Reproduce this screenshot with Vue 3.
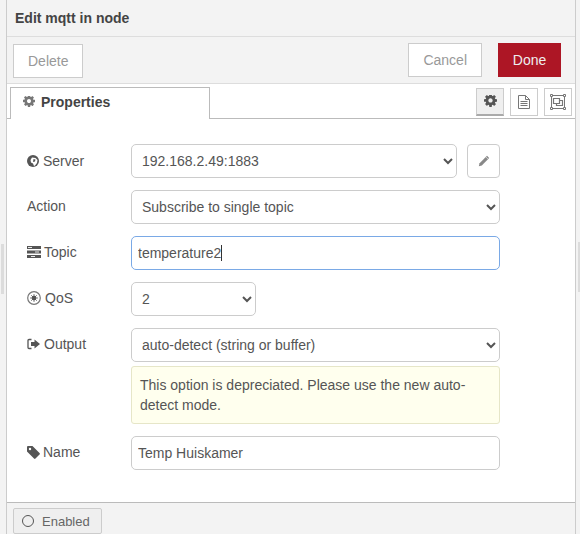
<script setup>
const cog = "M1024 640q0-106-75-181t-181-75-181 75-75 181 75 181 181 75 181-75 75-181zm512-109v222q0 12-8 23t-20 13l-185 28q-19 54-39 91 35 50 107 138 10 12 10 25t-9 23q-27 37-99 108t-94 71q-12 0-26-9l-138-108q-44 23-91 38-16 136-29 186-7 28-36 28h-222q-14 0-24.500-8.500t-11.500-21.500l-28-184q-49-16-90-37l-141 107q-10 9-25 9-14 0-25-11-126-114-165-168-7-10-7-23 0-12 8-23 15-21 51-66.500t54-70.500q-27-50-41-99l-183-27q-13-2-21-12.500t-8-23.500v-222q0-12 8-23t19-13l186-28q14-46 39-92-40-57-107-138-10-12-10-24 0-10 9-23 26-36 98.500-107.500t94.500-71.500q13 0 26 10l138 107q44-23 91-38 16-136 29-186 7-28 36-28h222q14 0 24.500 8.500t11.500 21.500l28 184q49 16 90 37l142-107q9-9 24-9 13 0 25 10 129 119 165 170 7 8 7 22 0 12-8 23-15 21-51 66.500t-54 70.500q26 50 41 98l183 28q13 2 21 12.500t8 23.500z"
</script>

<template>
  <div class="page">
    <div class="gutter"><span class="grip"></span></div>
    <div class="tray">
      <div class="title">Edit mqtt in node</div>
      <div class="toolbar">
        <button class="btn delete">Delete</button>
        <span class="spacer"></span>
        <button class="btn cancel">Cancel</button>
        <button class="btn primary">Done</button>
      </div>
      <div class="tabs">
        <div class="tab">
          <svg class="tab-cog" viewBox="0 0 1536 1536"><path :d="cog" fill="#777" /></svg>
          <span>Properties</span>
        </div>
        <div class="tab-links">
          <span class="tab-link active">
            <svg width="13" height="13" viewBox="0 0 1536 1536"><path :d="cog" fill="#555" /></svg>
          </span>
          <span class="tab-link">
            <svg width="12" height="14" viewBox="0 0 12 14" fill="none" stroke="#777">
              <path d="M.5 .5h7l4 4v9H.5z M7.500 .5v4h4" />
              <path d="M2.500 6.500h7M2.500 8.500h7M2.500 10.500h7" />
            </svg>
          </span>
          <span class="tab-link">
            <svg width="16" height="16" viewBox="0 0 16 16" fill="none" stroke="#777">
              <path d="M1.500 1.500h13v13h-13z" />
              <path d="M3.500 4.500h6v5h-6z M6.500 9.500v2h6v-5h-3" stroke-width="1.200" />
              <path d="M0 0h3v3H0zM13 0h3v3h-3zM0 13h3v3H0zM13 13h3v3h-3z" fill="#fff" stroke="none" />
              <path d="M.5 .5h2v2h-2zM13.500 .5h2v2h-2zM.5 13.500h2v2h-2zM13.500 13.500h2v2h-2z" />
            </svg>
          </span>
        </div>
      </div>
      <div class="form">
        <div class="row">
          <label class="lbl first">
            <svg class="ic" width="12" height="12" viewBox="0 0 12 12">
              <circle cx="6" cy="6" r="6" fill="#555" />
              <path d="M5 2.500l3.500 .5 2 2-.5 3-2 2.500-1 .5-1-2.500-2-1-.5-2.500z" fill="#fff" />
              <path d="M6.500 4l2 .5-.5 2-2 .5z" fill="#555" />
            </svg>
            <span>Server</span>
          </label>
          <select class="field server"><option>192.168.2.49:1883</option></select>
          <button class="edit">
            <svg width="12" height="12" viewBox="0 0 12 12">
              <path d="M9 .8l2.200 2.200-7.400 7.400-3 .8.800-3z" fill="#888" />
              <path d="M7.800 1.900l2.300 2.300" stroke="#fff" stroke-width=".6" />
            </svg>
          </button>
        </div>
        <div class="row">
          <label class="lbl"><span>Action</span></label>
          <select class="field wide"><option>Subscribe to single topic</option></select>
        </div>
        <div class="row">
          <label class="lbl">
            <svg class="ic" width="14" height="12" viewBox="0 0 14 12">
              <path d="M0 0h14v3H0zM0 4.500h14v3H0zM0 9h14v3H0z" fill="#555" />
              <path d="M1 1h4v1H1zM8 5.500h4v1H8zM4 10h4v1H4z" fill="#e8e8e8" />
            </svg>
            <span class="tight-label">Topic</span>
          </label>
          <div class="caret-wrap">
            <input class="field wide focus text" value="temperature2" />
            <span class="caret"></span>
          </div>
        </div>
        <div class="row">
          <label class="lbl">
            <svg class="ic" width="14" height="14" viewBox="0 0 14 14">
              <circle cx="7" cy="7" r="6.300" fill="none" stroke="#777" stroke-width="1.200" />
              <circle cx="7" cy="7" r="2.200" fill="#555" />
              <path d="M7 3.200v7.600M3.200 7h7.600M4.300 4.300l5.400 5.400M9.700 4.300l-5.400 5.400" stroke="#555" stroke-width=".9" />
            </svg>
            <span>QoS</span>
          </label>
          <select class="field qos"><option>2</option></select>
        </div>
        <div class="row tight">
          <label class="lbl">
            <svg class="ic out" width="13" height="12" viewBox="0 0 13 12">
              <path d="M4.500 1.500H2A1 1 0 0 0 1 2.500v7a1 1 0 0 0 1 1h2.500" fill="none" stroke="#555" stroke-width="1.300" />
              <path d="M7.500 1.500L13 6 7.500 10.500V8H4V4h3.500z" fill="#555" />
            </svg>
            <span>Output</span>
          </label>
          <select class="field wide"><option>auto-detect (string or buffer)</option></select>
        </div>
        <div class="row">
          <span class="lbl"></span>
          <div class="tip">This option is depreciated. Please use the new auto-detect mode.</div>
        </div>
        <div class="row">
          <label class="lbl">
            <svg class="ic" width="13" height="13" viewBox="0 0 13 13">
              <path d="M0 1a1 1 0 0 1 1-1h4.500l7 7a1 1 0 0 1 0 1.500l-4 4a1 1 0 0 1-1.500 0L0 5.500z" fill="#555" />
              <circle cx="3" cy="3" r="1.200" fill="#fff" />
            </svg>
            <span class="tight-label">Name</span>
          </label>
          <input class="field wide text" value="Temp Huiskamer" />
        </div>
      </div>
      <div class="footer">
        <button class="enabled"><span class="dot"></span>Enabled</button>
      </div>
    </div>
    <div class="gutter right"><span class="grip"></span></div>
  </div>
</template>

<style>
html, body { margin: 0; height: 100%; overflow: hidden; }
</style>

<style scoped>
.page { display: flex; height: 534px; width: 580px; overflow: hidden; background: #f3f3f3; font-family: "Liberation Sans", Arial, sans-serif; font-size: 14px; color: #555; }
.gutter { width: 6px; flex: none; position: relative; }
.gutter.right { width: 4px; }
.grip { position: absolute; left: 1px; top: 244px; width: 3px; height: 50px; background: #dcdcdc; }
.right .grip { left: 2px; top: 242px; }
.tray { flex: 1; min-width: 0; display: flex; flex-direction: column; border-left: 1px solid #ccc; border-right: 1px solid #ccc; background: #fff; }
.title { height: 37px; flex: none; box-sizing: border-box; padding: 0 8px; line-height: 36px; font-weight: 700; color: #444; background: #f3f3f3; border-bottom: 1px solid #ddd; }
.toolbar { height: 47px; flex: none; box-sizing: border-box; display: flex; align-items: flex-start; padding: 6px 14px 0 6px; gap: 16px; background: #f3f3f3; border-bottom: 1px solid #ddd; }
.spacer { flex: 1; }
.btn { height: 34px; box-sizing: border-box; padding: 0 14px; border: 1px solid #ccc; background: #fff; color: #999; font: 14px "Liberation Sans", Arial, sans-serif; }
.delete { margin-top: 1px; }
.primary { width: 63px; padding: 0; background: #ad1625; border-color: #ad1625; color: #eee; }
.tabs { height: 35px; flex: none; box-sizing: border-box; display: flex; justify-content: space-between; border-bottom: 1px solid #bbb; padding: 3px 3px 0 3px; position: relative; }
.tab { width: 200px; height: 32px; box-sizing: border-box; border: 1px solid #bbb; border-bottom: 0; background: #fff; display: flex; align-items: center; gap: 6px; padding: 0 0 3px 12px; font-weight: 700; color: #444; }
.tab-cog { width: 12px; height: 12px; }
.tab-links { display: flex; gap: 6px; padding-top: 1px; }
.tab-link { width: 28px; height: 28px; box-sizing: border-box; border: 1px solid #ccc; background: #fff; display: flex; align-items: center; justify-content: center; }
.tab-link.active { background: #efefef; border-bottom: 2px solid #aaa; }
.form { flex: 1; min-height: 0; padding: 25px 0 0 20px; }
.row { display: flex; align-items: flex-start; margin-bottom: 12px; width: 473px; }
.row.tight { margin-bottom: 4px; }
.lbl { width: 104px; flex: none; display: flex; align-items: center; gap: 4px; height: 34px; color: #555; margin-top: -1px; }
.lbl.first { margin-top: 0; }
.tight-label { margin-left: -1px; }
.ic { flex: none; }
.field { height: 34px; box-sizing: border-box; border: 1px solid #ccc; border-radius: 5px; background: #fff; color: #555; font: 14px "Liberation Sans", Arial, sans-serif; padding: 4px 6px; outline: none; margin: 0; }
.text { padding: 6px; }
.server { width: 326px; }
.wide { width: 369px; }
.qos { width: 125px; }
.focus { border-color: #7aa9e6; display: block; }
.caret-wrap { position: relative; }
.caret { position: absolute; left: 90px; top: 9px; width: 1px; height: 16px; background: #333; }
.edit { width: 33px; height: 34px; margin-left: 10px; box-sizing: border-box; border: 1px solid #ccc; border-radius: 4px; background: #fff; display: flex; align-items: center; justify-content: center; padding: 0; }
.tip { width: 369px; height: 58px; box-sizing: border-box; padding: 8px; background: #ffe; border: 1px solid #e6e6c8; border-radius: 3px; line-height: 20px; color: #555; }
.footer { height: 32px; flex: none; box-sizing: border-box; border-top: 1px solid #bbb; background: #f3f3f3; padding: 5px 0 0 6px; }
.enabled { width: 89px; height: 26px; box-sizing: border-box; border: 1px solid #ccc; border-radius: 2px; background: #efefef; color: #666; font: 13px "Liberation Sans", Arial, sans-serif; display: flex; align-items: center; padding: 0 0 0 8px; gap: 8px; }
.dot { width: 12px; height: 12px; box-sizing: border-box; border: 1px solid #555; border-radius: 50%; }
</style>
